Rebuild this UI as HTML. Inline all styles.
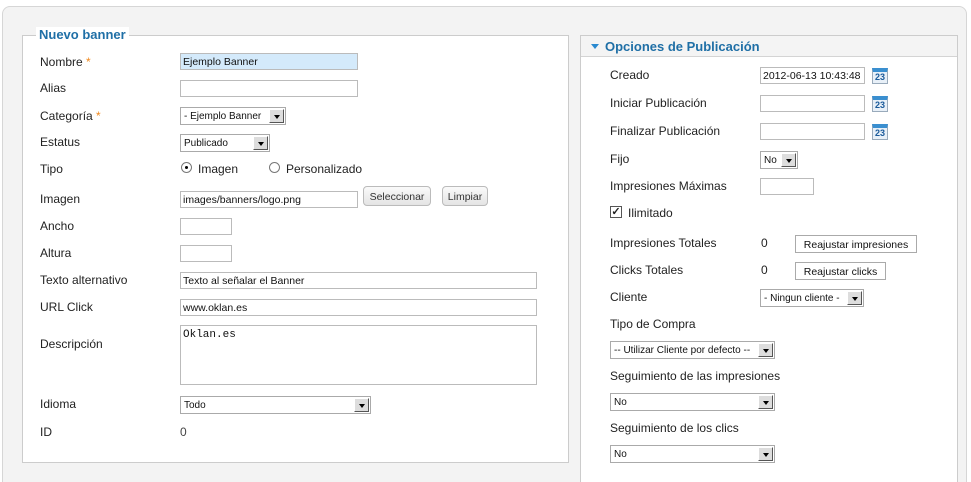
<!DOCTYPE html>
<html style="width:971px;height:482px;overflow:hidden"><head><meta charset="utf-8"><style>
*{box-sizing:border-box;margin:0;padding:0}
body{width:971px;height:482px;background:#fff;font-family:"Liberation Sans",Arial,sans-serif;font-size:12px;color:#222;position:relative;overflow:hidden}
.a{position:absolute}
#outer{left:2px;top:6px;width:965px;height:490px;background:#f3f3f3;border:1px solid #d6d6d6;border-radius:8px}
#fs{left:22px;top:35px;width:547px;height:428px;background:#fff;border:1px solid #ccc}
#leg{left:36px;top:27px;background:#fff;padding:0 3px;color:#1f6fa6;font-weight:bold;font-size:13px}
#rp{left:580px;top:35px;width:378px;height:460px;background:#fff;border:1px solid #ccc}
#rh{left:581px;top:36px;width:376px;height:21px;background:#f4f4f4;border-bottom:1px solid #d4d4d4;color:#1f6fa6;font-weight:bold;font-size:13px;padding:3px 0 0 24px}
.lb{position:absolute;font-size:12px;color:#222}
.st{color:#f0891e}
.in{position:absolute;height:17px;border:1px solid #bbb;background:#fff;font-size:10.5px;padding:2px 2px;white-space:nowrap;overflow:hidden;color:#111}
.sel{position:absolute;height:18px;border:1px solid #aaa;background:#fff;font-size:10px;padding:3px 3px;white-space:nowrap;overflow:hidden;color:#111}
.sel i{position:absolute;right:1px;top:1px;width:15px;height:14px;background:#ddd;border:1px solid;border-color:#fff #555 #555 #fff}
.sel i:after{content:"";position:absolute;left:4px;top:5px;border:3px solid transparent;border-top:4px solid #000}
.bt{position:absolute;height:20px;border:1px solid #bbb;border-radius:4px;background:linear-gradient(#fafafa,#e4e4e4);font-size:10.5px;text-align:center;padding-top:4px;color:#333}
.bt2{position:absolute;height:18px;border:1px solid #aaa;background:#fff;font-size:10.5px;text-align:center;padding-top:3px;color:#111}
.cal{position:absolute;width:16px;height:16px;background:#e8f0f8;border:1px solid #9ab;border-top:4px solid #3a8fd0;font-size:9px;font-weight:bold;color:#1a5a9a;text-align:center;line-height:10px}
.rd{position:absolute;width:11px;height:11px;border:1px solid #777;border-radius:50%;background:#fff}
</style></head><body>
<div class="a" id="outer"></div>
<div class="a" id="fs"></div>
<div class="a" id="leg">Nuevo banner</div>

<div class="lb" style="left:40px;top:55px">Nombre <span class="st">*</span></div>
<div class="in" style="left:180px;top:53px;width:178px;background:#d4eafb">Ejemplo Banner</div>
<div class="lb" style="left:40px;top:81px">Alias</div>
<div class="in" style="left:180px;top:80px;width:178px"></div>
<div class="lb" style="left:40px;top:109px">Categoría <span class="st">*</span></div>
<div class="sel" style="left:180px;top:107px;width:106px">- Ejemplo Banner<i></i></div>
<div class="lb" style="left:40px;top:135px">Estatus</div>
<div class="sel" style="left:180px;top:134px;width:90px">Publicado<i></i></div>
<div class="lb" style="left:40px;top:162px">Tipo</div>
<div class="rd" style="left:181px;top:162px"><div style="position:absolute;left:3px;top:3px;width:3px;height:3px;background:#000;border-radius:50%"></div></div>
<div class="lb" style="left:198px;top:162px">Imagen</div>
<div class="rd" style="left:269px;top:162px"></div>
<div class="lb" style="left:286px;top:162px">Personalizado</div>
<div class="lb" style="left:40px;top:192px">Imagen</div>
<div class="in" style="left:180px;top:191px;width:178px">images/banners/logo.png</div>
<div class="bt" style="left:363px;top:186px;width:68px">Seleccionar</div>
<div class="bt" style="left:442px;top:186px;width:46px">Limpiar</div>
<div class="lb" style="left:40px;top:219px">Ancho</div>
<div class="in" style="left:180px;top:218px;width:52px"></div>
<div class="lb" style="left:40px;top:246px">Altura</div>
<div class="in" style="left:180px;top:245px;width:52px"></div>
<div class="lb" style="left:40px;top:273px">Texto alternativo</div>
<div class="in" style="left:180px;top:272px;width:357px">Texto al señalar el Banner</div>
<div class="lb" style="left:40px;top:300px">URL Click</div>
<div class="in" style="left:180px;top:299px;width:357px">www.oklan.es</div>
<div class="lb" style="left:40px;top:337px">Descripción</div>
<div class="in" style="left:180px;top:325px;width:357px;height:60px;font-family:'Liberation Mono',monospace;font-size:11px;padding:3px 2px">Oklan.es</div>
<div class="lb" style="left:40px;top:397px">Idioma</div>
<div class="sel" style="left:180px;top:396px;width:191px">Todo<i></i></div>
<div class="lb" style="left:40px;top:425px">ID</div>
<div class="lb" style="left:180px;top:425px;color:#444">0</div>

<div class="a" id="rp"></div>
<div class="a" id="rh">Opciones de Publicación</div>
<div class="a" style="left:591px;top:44px;border:4px solid transparent;border-top:5px solid #2a8ad0;border-bottom:0"></div>

<div class="lb" style="left:610px;top:68px">Creado</div>
<div class="in" style="left:760px;top:67px;width:105px">2012-06-13 10:43:48</div>
<div class="cal" style="left:872px;top:68px">23</div>
<div class="lb" style="left:610px;top:96px">Iniciar Publicación</div>
<div class="in" style="left:760px;top:95px;width:105px"></div>
<div class="cal" style="left:872px;top:96px">23</div>
<div class="lb" style="left:610px;top:124px">Finalizar Publicación</div>
<div class="in" style="left:760px;top:123px;width:105px"></div>
<div class="cal" style="left:872px;top:124px">23</div>
<div class="lb" style="left:610px;top:152px">Fijo</div>
<div class="sel" style="left:760px;top:151px;width:38px">No<i></i></div>
<div class="lb" style="left:610px;top:179px">Impresiones Máximas</div>
<div class="in" style="left:760px;top:178px;width:54px"></div>
<div class="a" style="left:610px;top:206px;width:12px;height:12px;border:1px solid #555;background:#fff;font-size:11px;line-height:10px;text-align:center;font-weight:bold">✓</div>
<div class="lb" style="left:628px;top:206px">Ilimitado</div>
<div class="lb" style="left:610px;top:236px">Impresiones Totales</div>
<div class="lb" style="left:761px;top:236px">0</div>
<div class="bt2" style="left:795px;top:235px;width:122px">Reajustar impresiones</div>
<div class="lb" style="left:610px;top:263px">Clicks Totales</div>
<div class="lb" style="left:761px;top:263px">0</div>
<div class="bt2" style="left:795px;top:262px;width:91px">Reajustar clicks</div>
<div class="lb" style="left:610px;top:290px">Cliente</div>
<div class="sel" style="left:760px;top:289px;width:104px">- Ningun cliente -<i></i></div>
<div class="lb" style="left:610px;top:317px">Tipo de Compra</div>
<div class="sel" style="left:610px;top:341px;width:165px">-- Utilizar Cliente por defecto --<i></i></div>
<div class="lb" style="left:610px;top:369px">Seguimiento de las impresiones</div>
<div class="sel" style="left:610px;top:393px;width:165px">No<i></i></div>
<div class="lb" style="left:610px;top:421px">Seguimiento de los clics</div>
<div class="sel" style="left:610px;top:445px;width:165px">No<i></i></div>
</body></html>
